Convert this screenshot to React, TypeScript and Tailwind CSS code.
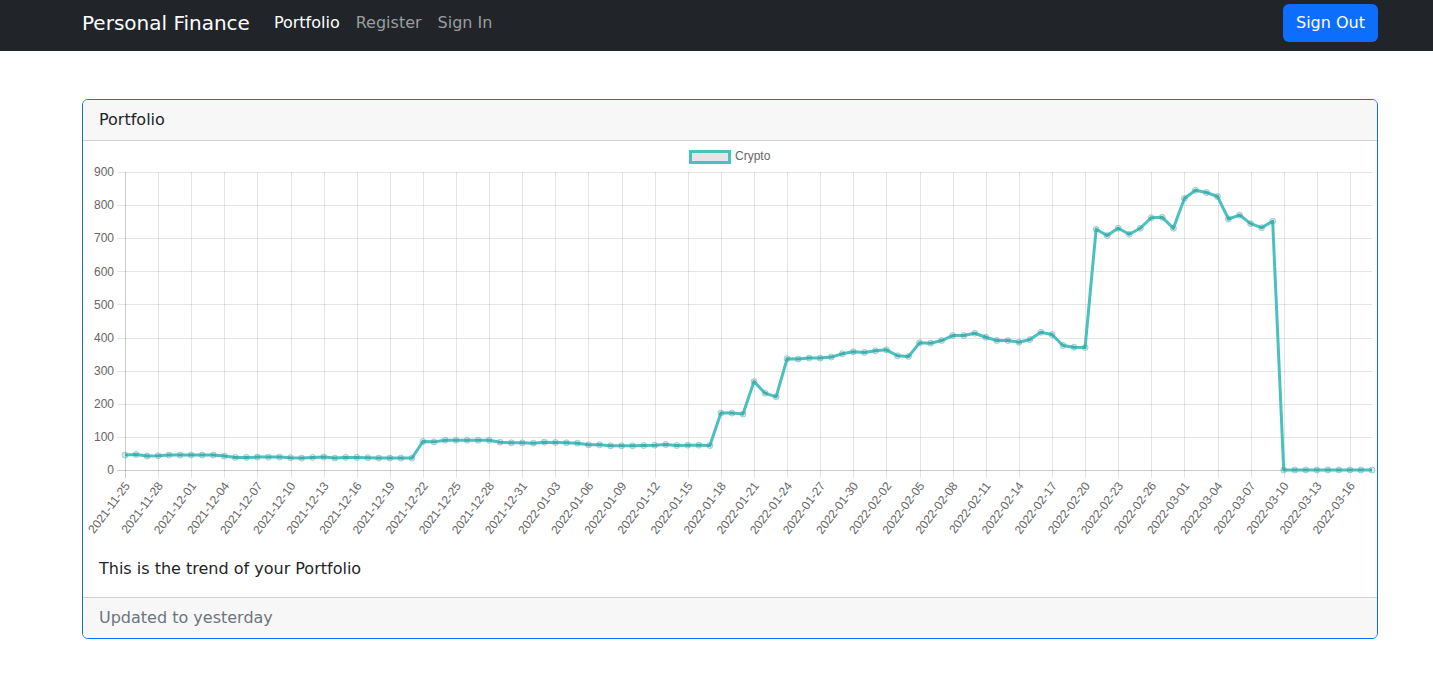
import React from "react";

const DATA: number[] = [
  45, 47, 42, 43, 45, 45, 45, 45, 45, 42, 38, 38, 39, 39, 39, 37, 36, 38, 39, 36, 38, 38, 37, 36, 36, 36, 36,
  86, 85, 90, 90, 90, 90, 90, 84, 82, 82, 81, 84, 83, 82, 81, 76, 76, 73, 73, 73, 74, 75, 77, 74, 75, 75, 74,
  172, 172, 169, 267, 232, 221,
  336, 335, 338, 338, 341, 351, 357, 355, 360, 363, 345, 343, 384, 383, 391, 406, 406, 413, 401, 391, 391, 386, 394, 416, 409, 376, 371, 370,
  727, 708, 730, 712, 730, 762, 763, 730, 820, 845, 838, 826, 758, 770, 744, 732, 751,
  0, 0, 0, 0, 0, 0, 0, 0, 0,
];

const X0 = 125;
const X1 = 1372;
const Y0 = 470; // value 0
const Y900 = 172;
const STEP = (X1 - X0) / (DATA.length - 1);
const xOf = (i: number) => X0 + i * STEP;
const yOf = (v: number) => Y0 - (v / 900) * (Y0 - Y900);

function dateLabel(i: number) {
  const d = new Date(Date.UTC(2021, 10, 25 + i));
  const y = d.getUTCFullYear();
  const m = String(d.getUTCMonth() + 1).padStart(2, "0");
  const day = String(d.getUTCDate()).padStart(2, "0");
  return `${y}-${m}-${day}`;
}

function Chart() {
  const font = "'Liberation Sans', Arial, sans-serif";
  const yTicks = [0, 100, 200, 300, 400, 500, 600, 700, 800, 900];
  const xTicks: number[] = [];
  for (let i = 0; i < DATA.length; i += 3) xTicks.push(i);
  const pts = DATA.map((v, i) => `${xOf(i).toFixed(2)},${yOf(v).toFixed(2)}`).join(" ");
  return (
    <svg width={1294} height={400} viewBox="83 141 1294 400" className="block">
      {/* legend */}
      <rect x={690.5} y={151.5} width={39} height={11} fill="rgba(0,0,0,0.1)" stroke="#4bc0c0" strokeWidth={3} />
      <text x={735} y={157} fontFamily={font} fontSize={12} fill="#666" dominantBaseline="middle">
        Crypto
      </text>
      {/* horizontal grid */}
      {yTicks.map((v) => (
        <g key={v}>
          <line
            x1={117}
            x2={X1}
            y1={Math.round(yOf(v)) + 0.5}
            y2={Math.round(yOf(v)) + 0.5}
            stroke={v === 0 ? "rgba(0,0,0,0.2)" : "rgba(0,0,0,0.1)"}
            strokeWidth={1}
          />
          <text
            x={114}
            y={yOf(v) + 1}
            fontFamily={font}
            fontSize={12}
            fill="#666"
            textAnchor="end"
            dominantBaseline="middle"
          >
            {v}
          </text>
        </g>
      ))}
      {/* vertical grid */}
      {xTicks.map((i) => (
        <line
          key={i}
          x1={Math.round(xOf(i)) + 0.5}
          x2={Math.round(xOf(i)) + 0.5}
          y1={Y900}
          y2={478}
          stroke={i === 0 ? "rgba(0,0,0,0.2)" : "rgba(0,0,0,0.1)"}
          strokeWidth={1}
        />
      ))}
      {/* x labels */}
      {xTicks.map((i) => (
        <text
          key={i}
          x={xOf(i) + 3}
          y={484}
          fontFamily={font}
          fontSize={12}
          fill="#666"
          textAnchor="end"
          dominantBaseline="middle"
          transform={`rotate(-53 ${xOf(i) + 3} 484)`}
        >
          {dateLabel(i)}
        </text>
      ))}
      {/* line */}
      <polyline points={pts} fill="none" stroke="#4bc0c0" strokeWidth={3} strokeLinejoin="round" />
      {DATA.map((v, i) => (
        <circle
          key={i}
          cx={xOf(i)}
          cy={yOf(v)}
          r={3}
          fill="rgba(0,0,0,0.1)"
          stroke="rgba(75,192,192,0.6)"
          strokeWidth={1}
        />
      ))}
    </svg>
  );
}

export default function App() {
  return (
    <div className="min-h-[674px] bg-white text-[#212529]" style={{ fontFamily: "'DejaVu Sans', sans-serif" }}>
      <nav className="h-[51px] bg-[#212529]">
        <div className="flex h-[46px] w-[1378px] items-center pl-[82px]">
          <span className="mr-4 text-[20px] leading-[30px] text-white">Personal Finance</span>
          <div className="flex text-[16px] leading-6">
            <span className="px-2 text-white">Portfolio</span>
            <span className="px-2 text-[#9a9da0]">Register</span>
            <span className="px-2 text-[#9a9da0]">Sign In</span>
          </div>
          <button className="ml-auto h-[38px] w-[95px] rounded-[6px] bg-[#0d6efd] text-center text-[16px] leading-6 text-white">
            Sign Out
          </button>
        </div>
      </nav>
      <div className="ml-[82px] mt-[48px] w-[1296px] overflow-hidden rounded-[6px] border border-[#0d6efd]">
        <div className="border-b border-[#d3d3d3] bg-[#f7f7f7] px-4 py-2 text-[16px] leading-6">Portfolio</div>
        <Chart />
        <div className="px-4 py-4 text-[16px] leading-6">This is the trend of your Portfolio</div>
        <div className="border-t border-[#d3d3d3] bg-[#f7f7f7] px-4 py-2 text-[16px] leading-6 text-[#6c757d]">
          Updated to yesterday
        </div>
      </div>
    </div>
  );
}
